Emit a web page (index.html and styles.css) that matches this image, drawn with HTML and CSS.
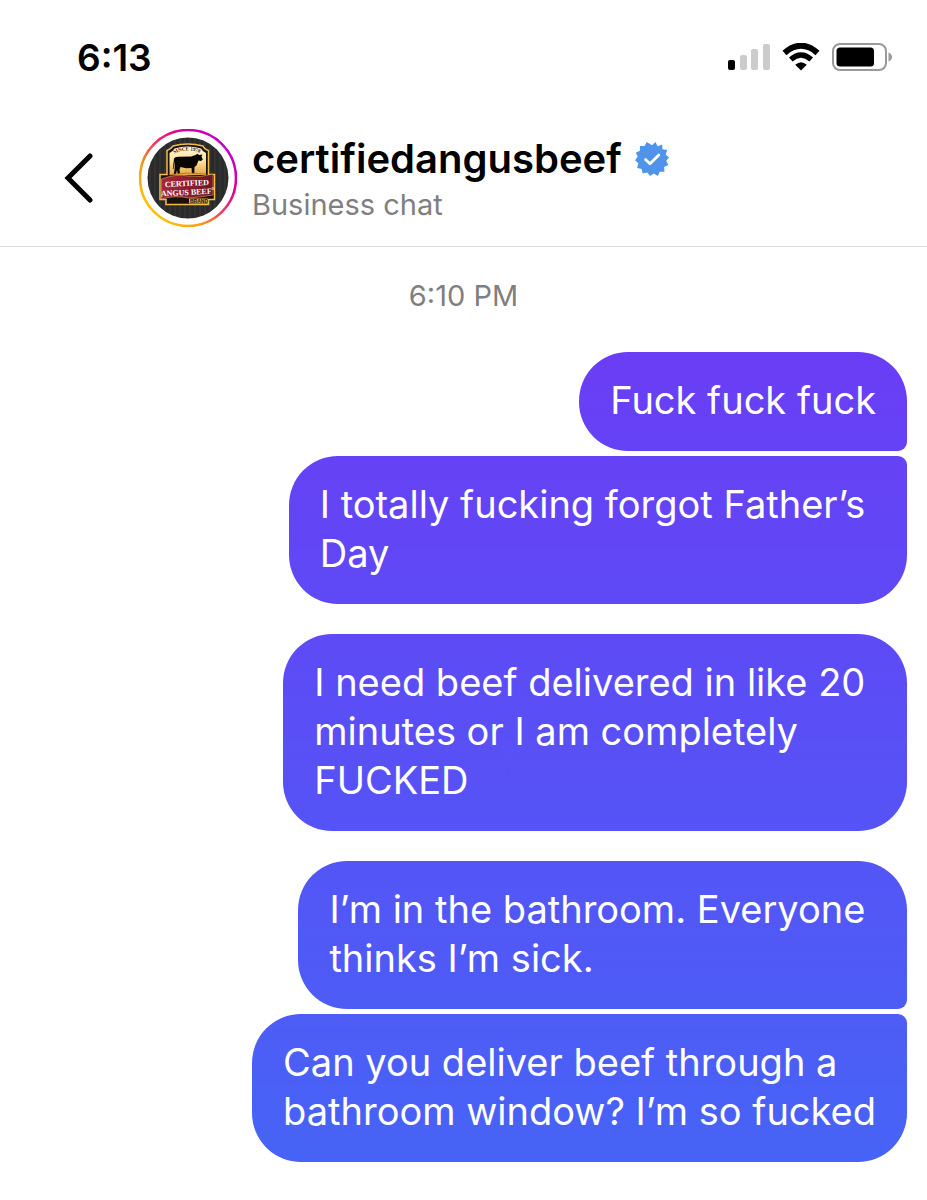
FILE: index.html
```html
<!DOCTYPE html>
<html lang="en">
<head>
  <meta charset="UTF-8" />
  <meta name="viewport" content="width=device-width, initial-scale=1.0"/>
  <title>certifiedangusbeef - Business chat</title>
  <link rel="stylesheet" href="styles.css">
</head>
<body>

<!-- STATUS BAR -->
<div class="status-bar">
  <time class="clock">6:13</time>
  <div class="status-icons">
    <svg class="signal" viewBox="0 0 42 28" aria-label="Signal">
      <rect x="0" y="17" width="7" height="10" rx="2" fill="#000"/>
      <rect x="12" y="12" width="7" height="15" rx="2" fill="#ccc"/>
      <rect x="23" y="6" width="7" height="21" rx="2" fill="#ccc"/>
      <rect x="35" y="1" width="7" height="26" rx="2" fill="#ccc"/>
    </svg>
    <svg class="wifi" viewBox="0 0 38 28" aria-label="Wi-Fi">
      <path d="M2.500 10Q19-4.500 35.500 10" fill="none" stroke="#000" stroke-width="6"/>
      <path d="M8.800 16.500Q19 7.500 29.200 16.500" fill="none" stroke="#000" stroke-width="5.500"/>
      <path d="M13.200 21.800Q19 16.500 24.800 21.800L19 27.500Z" fill="#000"/>
    </svg>
    <svg class="battery" viewBox="0 0 60 28" aria-label="Battery">
      <rect x="1" y="1" width="53" height="26" rx="7" fill="none" stroke="#999" stroke-width="2"/>
      <rect x="4.500" y="4.500" width="37.500" height="19" rx="3.500" fill="#000"/>
      <path d="M56.500 9.500Q60 11 60 14T56.500 18.500Z" fill="#999"/>
    </svg>
  </div>
</div>

<!-- CHAT HEADER -->
<header class="chat-header">
  <button type="button" class="back" aria-label="Back">
    <svg viewBox="0 0 30 52"><path d="M27 4L5 26L27 48" fill="none" stroke="#000" stroke-width="5" stroke-linecap="round" stroke-linejoin="miter"/></svg>
  </button>

  <svg class="avatar" viewBox="0 0 98 98" role="img" aria-label="Certified Angus Beef">
    <defs>
      <linearGradient id="ring" x1="0.15" y1="0.85" x2="0.85" y2="0.15">
        <stop offset="0" stop-color="#fdc000"/>
        <stop offset="0.25" stop-color="#fb9a10"/>
        <stop offset="0.5" stop-color="#f5385a"/>
        <stop offset="0.75" stop-color="#e0008a"/>
        <stop offset="1" stop-color="#c400c8"/>
      </linearGradient>
      <linearGradient id="sky" x1="0" y1="0" x2="0" y2="1">
        <stop offset="0" stop-color="#fff6d8"/>
        <stop offset="0.5" stop-color="#fde2a0"/>
        <stop offset="1" stop-color="#e6a544"/>
      </linearGradient>
      <linearGradient id="ribbon" x1="0" y1="0" x2="1" y2="0">
        <stop offset="0" stop-color="#a5283c"/>
        <stop offset="0.5" stop-color="#8c1c31"/>
        <stop offset="1" stop-color="#6c1526"/>
      </linearGradient>
      <pattern id="wood" width="5" height="98" patternUnits="userSpaceOnUse">
        <rect width="5" height="98" fill="#2b2a2b"/>
        <path d="M1 0V98" stroke="#3a393a" stroke-width="1"/>
      </pattern>
      <path id="sinceArc" d="M35 24.500Q48.500 18.500 63 24.500"/>
    </defs>
    <circle cx="49" cy="49" r="48" fill="#fff" stroke="url(#ring)" stroke-width="2.600"/>
    <circle cx="49" cy="49" r="40.500" fill="url(#wood)"/>
    <path d="M28 21.500Q32 20 34 17Q48.500 13 64 17Q65 20 69.500 21.500V45.500H75.500V70.500H69.500V75.500H27V70.500H21V45.500H28Z" fill="#17120f" stroke="#f0bd48" stroke-width="1.500"/>
    <path d="M30.500 46V24Q34 22.500 35.500 19.500Q48.500 15.500 62 19.500Q63.500 22.500 67 24V46Z" fill="url(#sky)"/>
    <!-- steer -->
    <path d="M35 29.500Q36 27.500 40 27.800L52 27.500L56.500 26L58.500 24.800L60 26L63.500 25.500L62.500 27.500L63.800 30.500L62 32L59.500 31.500L57.500 36.500L55.500 38L55.300 45H53L52.500 39L47 39.300L41.500 38L40.500 40.500L41 45H38.700L38 41L37 45H34.800L35.700 39L35.500 32L34.500 40H33.800Z" fill="#090705"/>
    <path d="M30.500 45.800Q48 42.800 67 45" fill="none" stroke="#bf7a25" stroke-width="1"/>
    <path d="M22.500 50Q37 44.500 49 47Q61 49 74 45V66Q62 68 50 69Q36 66 22.500 70Z" fill="url(#ribbon)" stroke="#e5ab42" stroke-width="0.600"/>
    <path d="M50 69.500H69V74.500H50Z" fill="#e5ab42"/>
    <text class="logo-since"><textPath href="#sinceArc">SINCE 1978</textPath></text>
    <g class="logo-name" transform="rotate(-3 48 58)">
      <text x="48" y="57">CERTIFIED</text>
      <text x="47" y="66">ANGUS BEEF</text>
    </g>
    <circle cx="74" cy="59.500" r="1" fill="none" stroke="#fff" stroke-width="0.600"/>
    <text class="logo-brand" x="60" y="74">BRAND</text>
  </svg>

  <div class="contact">
    <h1>certifiedangusbeef
      <svg class="verified" viewBox="0 0 34 34" aria-label="Verified">
        <path fill="#4f93ea" d="M17 3.200L20.500 0L22.600 4.200L27.100 2.400L27.500 7.200L32.200 8L30.700 12.600L34 15.400L31.200 18.700L33.400 22.900L29.100 25L29.500 29.700L24.700 29.800L22.900 34L18.800 31.600L15.200 34L12.200 30.500L7.600 31.600L6.700 26.900L2.100 25.900L3.400 21.300L0 18.300L2.800 14.700L.8 10.700L4.900 8.700L4.900 4L9.600 4L11.600 0L15.500 2.200Z"/>
        <path d="M10.500 17.600L15 21.800L23.800 13" fill="none" stroke="#fff" stroke-width="2.800" stroke-linecap="round" stroke-linejoin="round"/>
      </svg>
    </h1>
    <p>Business chat</p>
  </div>
</header>

<!-- MESSAGES -->
<main class="messages">
  <time class="timestamp">6:10 PM</time>

  <div class="group">
    <p class="bubble">Fuck fuck fuck</p>
    <p class="bubble">I totally fucking forgot Father’s <br>Day</p>
  </div>

  <div class="group">
    <p class="bubble">I need beef delivered in like 20 <br>minutes or I am completely <br>FUCKED</p>
  </div>

  <div class="group">
    <p class="bubble">I’m in the bathroom. Everyone <br>thinks I’m sick.</p>
    <p class="bubble">Can you deliver beef through a <br>bathroom window? I’m so fucked</p>
  </div>
</main>

</body>
</html>
```
FILE: styles.css
```css
:root {
  --gradient-top: #6c3bf5;
  --gradient-bottom: #4565f6;
  --gray: #7f7f82;
}

* {
  box-sizing: border-box;
  margin: 0;
  padding: 0;
}

body {
  font-family: Inter, 'Liberation Sans', sans-serif;
  background: #fff;
  color: #000;
}

svg {
  display: block;
  flex-shrink: 0;
}

.status-bar {
  display: flex;
  justify-content: space-between;
  align-items: center;
  height: 114px;
  padding: 0 35px 0 77px;
}

.clock {
  font-size: 37px;
  font-weight: 600;
}

.status-icons {
  display: flex;
  align-items: center;
  gap: 12px;
}

.signal {
  width: 42px;
  height: 28px;
}

.wifi {
  width: 38px;
  height: 28px;
}

.battery {
  width: 60px;
  height: 28px;
}

.chat-header {
  display: flex;
  align-items: center;
  padding: 15px 20px 19px 63px;
  border-bottom: 1px solid #dcdcdc;
}

.back {
  border: none;
  background: none;
  cursor: pointer;
  margin-right: 46px;
}

.back svg {
  width: 30px;
  height: 52px;
}

.avatar {
  width: 98px;
  height: 98px;
  margin-right: 15px;
}

.logo-since {
  font-family: 'Liberation Serif', serif;
  font-size: 5px;
  font-weight: 700;
  fill: #2a1c10;
}

.logo-name {
  font-family: 'Liberation Serif', serif;
  font-size: 8px;
  font-weight: 700;
  fill: #fff;
  text-anchor: middle;
}

.logo-brand {
  font-family: 'Liberation Sans', sans-serif;
  font-size: 5px;
  font-weight: 700;
  fill: #17120f;
  text-anchor: middle;
}

.contact {
  padding-top: 6px;
}

h1 {
  display: flex;
  align-items: center;
  gap: 13px;
  font-size: 40px;
  font-weight: 600;
  line-height: 48px;
}

.verified {
  width: 34px;
  height: 34px;
}

.contact p {
  font-size: 29px;
  line-height: 44px;
  color: var(--gray);
}

.messages {
  display: flex;
  flex-direction: column;
  gap: 30px;
  padding: 30px 20px 37px;
}

.timestamp {
  font-size: 29px;
  line-height: 38px;
  margin-bottom: 7px;
  text-align: center;
  color: var(--gray);
}

.group {
  display: flex;
  flex-direction: column;
  align-items: flex-end;
  gap: 5px;
}

/* gradient is fixed to the screen so it runs on from bubble to bubble */
.bubble {
  padding: 24px 31px 26px;
  border-radius: 49px;
  background: linear-gradient(var(--gradient-top) 25%, var(--gradient-bottom) 100%) fixed;
  color: #fff;
  font-size: 38px;
  line-height: 49px;
  white-space: pre;
}

.bubble:not(:last-child) {
  border-bottom-right-radius: 9px;
}

.bubble:not(:first-child) {
  border-top-right-radius: 9px;
}
```
